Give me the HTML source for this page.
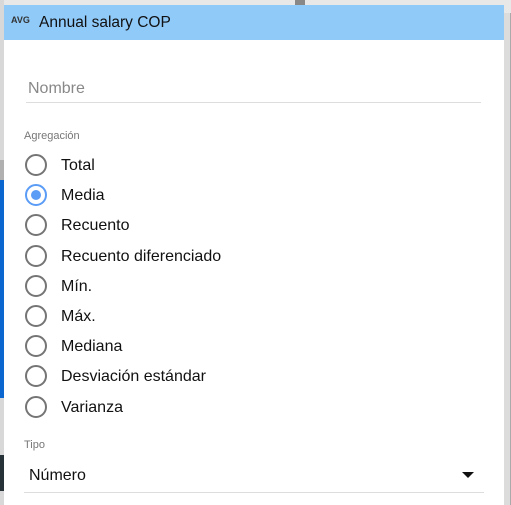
<!DOCTYPE html>
<html><head><style>
body{margin:0;width:511px;height:505px;overflow:hidden;background:#e8e8e8;font-family:"Liberation Sans",Arial,sans-serif;position:relative}
.abs{position:absolute}
.r{position:absolute;left:25px;width:18px;height:18px;border:2px solid #757575;border-radius:50%}
.t{position:absolute;left:61px;font-size:16px;color:#111}
</style></head><body>
<div class="abs" style="left:0;top:0;width:4px;height:505px;background:#d8d8d8"></div>
<div class="abs" style="left:0;top:180px;width:4px;height:218px;background:#0b66d0"></div>
<div class="abs" style="left:0;top:160px;width:4px;height:20px;background:#b0b0b0"></div>
<div class="abs" style="left:0;top:455px;width:4px;height:36px;background:#263238"></div>
<div class="abs" style="left:504px;top:13px;width:6px;height:492px;background:#dcdcdc;border-right:1px solid #aaa"></div>
<div class="abs" style="left:295px;top:0;width:10px;height:5px;background:#888"></div>
<div class="abs" style="left:4px;top:5px;width:500px;height:500px;background:#fff"></div>
<div class="abs" style="left:4px;top:5px;width:500px;height:35px;background:#90caf9"></div>
<div class="abs" style="left:11px;top:15px;font-size:9px;font-weight:bold;color:#333">AVG</div>
<div class="abs" style="left:39px;top:14px;font-size:15.5px;color:#111">Annual salary COP</div>
<div class="abs" style="left:28px;top:80px;font-size:16px;color:#888">Nombre</div>
<div class="abs" style="left:26px;top:102px;width:455px;height:1px;background:#ddd"></div>
<div class="abs" style="left:24px;top:130px;font-size:11px;color:#777">Agregación</div>
<div class="r" style="top:154px"></div><div class="t" style="top:157px">Total</div>
<div class="r" style="top:184px;border-color:#5b9cf6"></div><div class="abs" style="left:31px;top:190px;width:10px;height:10px;border-radius:50%;background:#5b9cf6"></div><div class="t" style="top:187px">Media</div>
<div class="r" style="top:214px"></div><div class="t" style="top:217px">Recuento</div>
<div class="r" style="top:245px"></div><div class="t" style="top:248px">Recuento diferenciado</div>
<div class="r" style="top:275px"></div><div class="t" style="top:278px">Mín.</div>
<div class="r" style="top:305px"></div><div class="t" style="top:308px">Máx.</div>
<div class="r" style="top:335px"></div><div class="t" style="top:338px">Mediana</div>
<div class="r" style="top:365px"></div><div class="t" style="top:368px">Desviación estándar</div>
<div class="r" style="top:396px"></div><div class="t" style="top:399px">Varianza</div>
<div class="abs" style="left:24px;top:439px;font-size:11px;color:#777">Tipo</div>
<div class="abs" style="left:29px;top:467px;font-size:16px;color:#111">Número</div>
<div class="abs" style="left:462px;top:472px;width:0;height:0;border-left:6px solid transparent;border-right:6px solid transparent;border-top:6px solid #111"></div>
<div class="abs" style="left:24px;top:492px;width:460px;height:1px;background:#ddd"></div>
</body></html>
